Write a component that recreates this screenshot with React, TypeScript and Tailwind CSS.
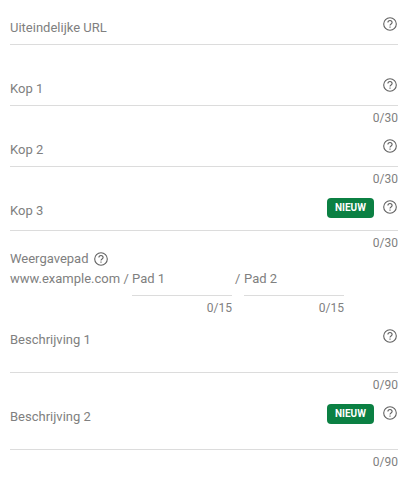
function HelpIcon() {
  return (
    <svg viewBox="0 0 16 16" fill="none" className="size-4 shrink-0 stroke-[#616161]" strokeWidth="1.1">
      <circle cx="8" cy="8" r="6.3" />
      <path d="M5.9 6.6a2.1 2.1 0 1 1 4.2 0c0 1.4-2.1 1.5-2.1 3" />
      <path d="M8 10.6v1.2" />
    </svg>
  );
}

function NewBadge() {
  return (
    <span className="-mt-px mr-2 h-5 w-[47px] rounded bg-[#0b8043] text-center text-[10px] leading-5 font-bold text-white">
      NIEUW
    </span>
  );
}

type FieldProps = {
  label: string;
  height: string;
  counter?: string;
  isNew?: boolean;
};

function Field({ label, height, counter, isNew }: FieldProps) {
  return (
    <div>
      <div className={`flex items-start border-b border-[#dcdcdc] ${height}`}>
        <span className="pt-0.5 leading-5">{label}</span>
        <div className="ml-auto flex items-start">
          {isNew && <NewBadge />}
          <HelpIcon />
        </div>
      </div>
      <div className="h-8 text-right text-xs leading-6">{counter}</div>
    </div>
  );
}

function PathField({ label }: { label: string }) {
  return (
    <div className="w-[100px]">
      <div className="h-[27px] border-b border-[#dcdcdc] leading-5">{label}</div>
      <div className="h-8 text-right text-xs leading-6">0/15</div>
    </div>
  );
}

export default function App() {
  return (
    <div className="h-[479px] w-[408px] overflow-hidden bg-white px-[10px] pt-4 font-[Roboto,sans-serif] text-[13px] text-[#808080]">
      <Field label="Uiteindelijke URL" height="h-[29px]" />
      <Field label="Kop 1" height="h-[29px]" counter="0/30" />
      <Field label="Kop 2" height="h-[29px]" counter="0/30" />
      <Field label="Kop 3" height="h-8" counter="0/30" isNew />

      <div className="-mt-[14px]">
        <div className="flex h-5 items-center gap-1">
          <span className="leading-5">Weergavepad</span>
          <HelpIcon />
        </div>
        <div className="flex leading-5">
          <span className="w-[122px]">www.example.com /</span>
          <PathField label="Pad 1" />
          <span className="w-3 pl-[3px]">/</span>
          <PathField label="Pad 2" />
        </div>
      </div>

      <Field label="Beschrijving 1" height="h-[45px]" counter="0/90" />
      <Field label="Beschrijving 2" height="h-[45px]" counter="0/90" isNew />
    </div>
  );
}
